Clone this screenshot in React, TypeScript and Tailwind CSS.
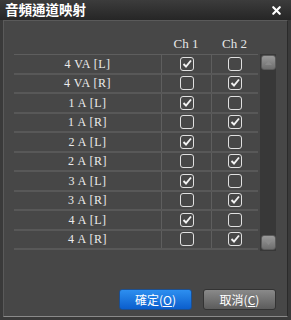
import { X } from "lucide-react";

type Row = { label: string; ch1: boolean; ch2: boolean };

const rows: Row[] = [
  { label: "4 VA [L]", ch1: true, ch2: false },
  { label: "4 VA [R]", ch1: false, ch2: true },
  { label: "1 A [L]", ch1: true, ch2: false },
  { label: "1 A [R]", ch1: false, ch2: true },
  { label: "2 A [L]", ch1: true, ch2: false },
  { label: "2 A [R]", ch1: false, ch2: true },
  { label: "3 A [L]", ch1: true, ch2: false },
  { label: "3 A [R]", ch1: false, ch2: true },
  { label: "4 A [L]", ch1: true, ch2: false },
  { label: "4 A [R]", ch1: false, ch2: true },
];

const Check = ({ on }: { on: boolean }) => (
  <span className="w-[14px] h-[14px] rounded-[3px] border border-[#e0e0e0] flex items-center justify-center">
    {on && (
      <svg width="12" height="12" viewBox="0 0 12 12">
        <path d="M2.5 6 L5 8.5 L10 2.5" stroke="#f2f2f2" strokeWidth="1.9" fill="none" />
      </svg>
    )}
  </span>
);

const ScrollBtn = ({ up }: { up: boolean }) => (
  <div className="w-[15px] h-[15px] rounded-[3px] bg-gradient-to-b from-[#9a9a9a] to-[#6e6e6e] border border-[#5a5a5a] flex items-center justify-center">
    <svg width="7" height="4" viewBox="0 0 7 4">
      <path d={up ? "M0 4 L3.5 0 L7 4 Z" : "M0 0 L3.5 4 L7 0 Z"} fill="#8a8a8a" />
    </svg>
  </div>
);

export default function App() {
  return (
    <div
      className="w-[291px] h-[320px] bg-[#3a3a3a] flex flex-col"
      style={{ fontFamily: '"Liberation Serif", "Noto Sans CJK TC", serif' }}
    >
      {/* title bar */}
      <div className="h-[20px] shrink-0 bg-gradient-to-b from-[#3c3c3c] to-[#262626] flex items-center justify-between pl-[5px] pr-[8px]">
        <span
          className="text-white text-[13.5px] font-bold leading-none"
          style={{ fontFamily: '"Noto Sans CJK TC", sans-serif' }}
        >
          音頻通道映射
        </span>
        <X size={13} strokeWidth={4} className="text-white" />
      </div>

      {/* body */}
      <div className="flex-1 mx-[3px] mb-[3px] bg-[#474747] border-t border-l border-[#5a5a5a] border-r border-r-[#2a2a2a] border-b border-b-[#8a8a8a] flex flex-col pt-[16px] pl-[10px] pr-[10px]">
        {/* header */}
        <div className="flex h-[17px] text-[#e6e6e6] text-[13px] leading-none">
          <div className="w-[147px]" />
          <div className="w-[50px] text-center">Ch 1</div>
          <div className="w-[47px] text-center">Ch 2</div>
        </div>

        <div className="flex">
          {/* table */}
          <div className="w-[244px] border-t border-[#5e5e5e]">
            {rows.map((r) => (
              <div key={r.label} className="flex h-[19.5px] border-b-2 border-[#585858] text-[#ececec] text-[12px]">
                <div className="w-[147px] flex items-center justify-center tracking-[0.5px]">{r.label}</div>
                <div className="w-[50px] border-l border-[#5e5e5e] flex items-center justify-center">
                  <Check on={r.ch1} />
                </div>
                <div className="w-[47px] border-l border-[#5e5e5e] flex items-center justify-center">
                  <Check on={r.ch2} />
                </div>
              </div>
            ))}
          </div>

          {/* scrollbar */}
          <div className="ml-[2px] w-[16px] h-[197px] bg-[#383838] flex flex-col justify-between items-center py-[1px]">
            <ScrollBtn up />
            <ScrollBtn up={false} />
          </div>
        </div>

        {/* buttons */}
        <div className="flex justify-end gap-[11px] mt-[38px] mr-[1px]">
          <button
            className="w-[73px] h-[21px] rounded-[3px] bg-gradient-to-b from-[#2d8ff0] to-[#0b5ecd] border border-[#1d4f8f] text-white text-[12px] flex items-center justify-center"
            style={{ fontFamily: '"Noto Sans CJK TC", sans-serif' }}
          >
            確定(<span className="underline">O</span>)
          </button>
          <button
            className="w-[73px] h-[21px] rounded-[3px] bg-gradient-to-b from-[#8a8a8a] to-[#5c5c5c] border border-[#333] text-white text-[12px] flex items-center justify-center"
            style={{ fontFamily: '"Noto Sans CJK TC", sans-serif' }}
          >
            取消(<span className="underline">C</span>)
          </button>
        </div>
      </div>
    </div>
  );
}
